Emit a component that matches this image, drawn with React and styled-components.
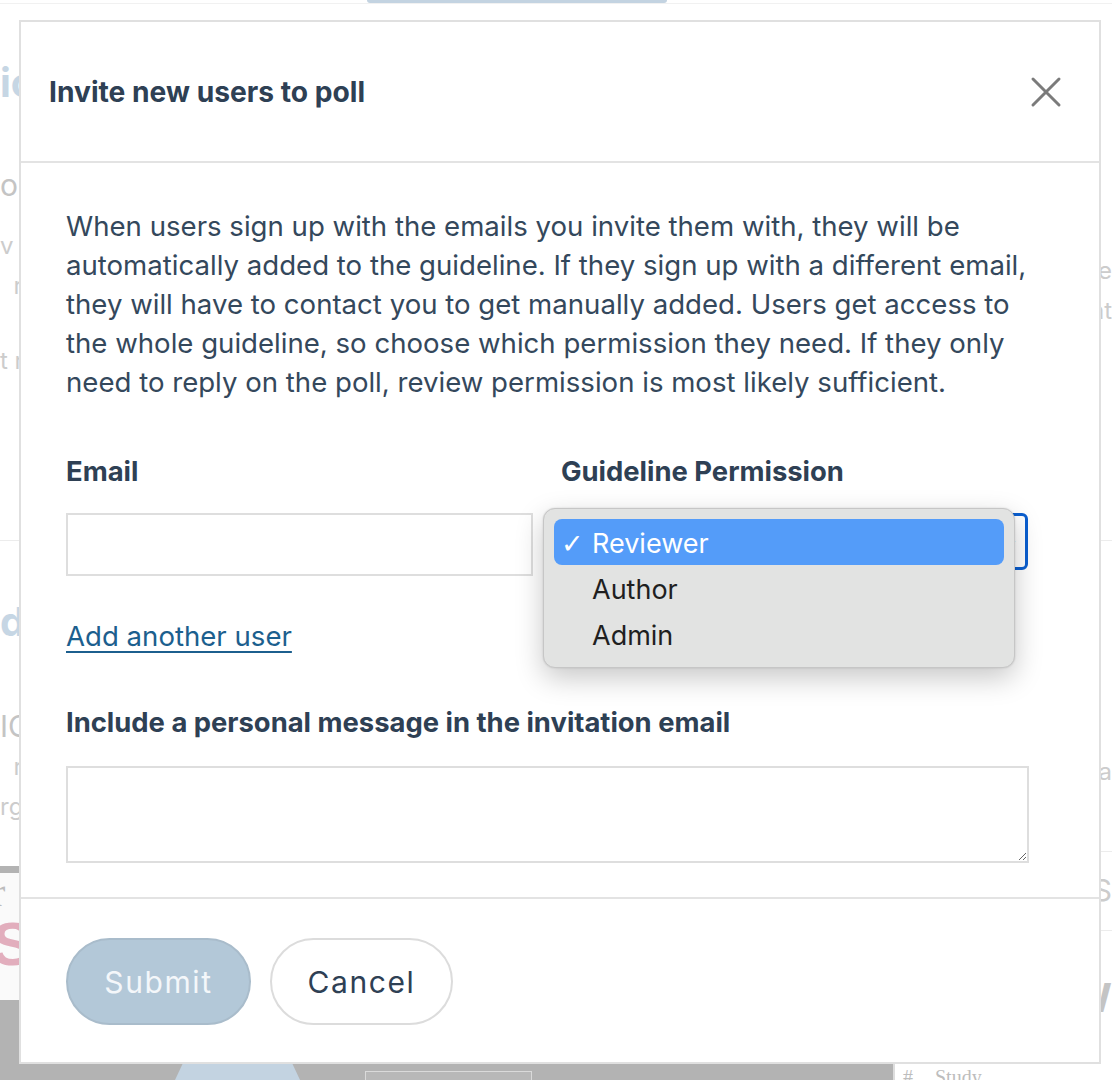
import React from 'react';
import styled, { createGlobalStyle } from 'styled-components';

const GlobalStyle = createGlobalStyle`
  html, body {
    margin: 0;
    padding: 0;
  }
  body {
    background: #fff;
    font-family: Inter, 'Noto Sans', sans-serif;
    overflow: hidden;
  }
`;

const Page = styled.div`
  position: relative;
  width: 1112px;
  height: 1080px;
  overflow: hidden;
  background: #fff;
`;

/* ---------- faded page behind the dialog ---------- */

const Backdrop = styled.div`
  display: flex;
  flex-direction: column;
  height: 100%;
`;

const TopBar = styled.div`
  height: 4px;
  border-bottom: 1px solid #f1f1f1;
  display: flex;
  padding-left: 367px;
  box-sizing: border-box;
`;

const TopTab = styled.div`
  width: 300px;
  height: 3px;
  background: #c3d3e1;
  border-radius: 0 0 3px 3px;
`;

const Upper = styled.div`
  height: 862px;
  display: flex;
  justify-content: space-between;
`;

const Edge = styled.div`
  width: ${(p) => p.$w}px;
  display: flex;
  flex-direction: column;
  overflow: hidden;
  align-items: ${(p) => (p.$right ? 'flex-end' : 'flex-start')};
`;

const Frag = styled.div`
  height: ${(p) => p.$h}px;
  flex-shrink: 0;
  display: flex;
  align-items: center;
  white-space: pre;
  font-size: ${(p) => p.$size || 24}px;
  font-weight: ${(p) => (p.$bold ? 700 : 400)};
  color: ${(p) => p.$color || '#c9c9c9'};
  ${(p) => p.$line && 'align-self: stretch; border-top: 1px solid #ececec;'}
`;

const Lower = styled.div`
  flex: 1;
  display: flex;
`;

const LowerLeft = styled.div`
  width: 893px;
  background: #b3b3b3;
  display: flex;
  flex-direction: column;
  padding-top: 7px;
  box-sizing: border-box;
`;

const ImageArea = styled.div`
  height: 127px;
  width: 60px;
  background: #fafafa;
  display: flex;
  flex-direction: column;
  font-family: 'Liberation Serif', serif;
  line-height: 1;
  overflow: hidden;
`;

const ImageWord = styled.span`
  font-size: ${(p) => p.$size}px;
  color: ${(p) => p.$color};
  font-weight: ${(p) => (p.$bold ? 700 : 400)};
  margin-left: -8px;
  font-family: ${(p) => (p.$sans ? "'Liberation Sans', sans-serif" : 'inherit')};
`;

const BottomShapes = styled.div`
  margin-top: auto;
  height: 16px;
  display: flex;
  align-items: flex-end;
`;

const BlueShape = styled.div`
  margin-left: 175px;
  width: 125px;
  height: 16px;
  background: #c3d3e1;
  clip-path: polygon(6% 0, 94% 0, 100% 100%, 0 100%);
`;

const BoxShape = styled.div`
  margin-left: 65px;
  width: 165px;
  height: 8px;
  border: 1px solid #dadada;
  border-bottom: none;
  background: #b8b8b8;
`;

const LowerRight = styled.div`
  flex: 1;
  display: flex;
  flex-direction: column;
  align-items: flex-end;
  background: #fff;
`;

const StudyHead = styled.div`
  margin-top: auto;
  align-self: stretch;
  height: 16px;
  display: flex;
  gap: 22px;
  padding-left: 8px;
  font-family: 'Liberation Serif', serif;
  font-size: 20px;
  color: #bdbdbd;
  border-left: 2px solid #ddd;
  line-height: 26px;
  overflow: hidden;
`;

/* ---------- dialog ---------- */

const Overlay = styled.div`
  position: absolute;
  inset: 0;
  padding: 20px 11px 16px 19px;
  display: flex;
`;

const Modal = styled.div`
  flex: 1;
  display: flex;
  flex-direction: column;
  background: #fff;
  border: 2px solid #e0e0e0;
  color: #2e4054;
`;

const Header = styled.div`
  height: 139px;
  display: flex;
  align-items: center;
  justify-content: space-between;
  padding: 0 36px 0 28px;
  border-bottom: 2px solid #e3e3e3;
`;

const Title = styled.h2`
  margin: 0;
  font-size: 28.2px;
  font-weight: 700;
  color: #2e4054;
`;

const CloseButton = styled.button`
  border: none;
  background: transparent;
  padding: 0;
  width: 34px;
  height: 34px;
  display: flex;
  align-items: center;
  justify-content: center;
  cursor: pointer;
`;

const Body = styled.div`
  padding: 44px 70px 34px 45px;
  border-bottom: 2px solid #e3e3e3;
`;

const Intro = styled.p`
  margin: 0 -18px 0 0;
  font-size: 27.6px;
  line-height: 39px;
  color: #34485c;
`;

const FieldGrid = styled.div`
  margin-top: 54px;
  display: grid;
  grid-template-columns: 467px 467px;
  column-gap: 28px;
`;

const Label = styled.label`
  display: block;
  font-size: 27.4px;
  font-weight: 700;
  line-height: 30px;
  color: #2e4054;
  margin-bottom: ${(p) => p.$gap || 27}px;
`;

const TextInput = styled.input`
  box-sizing: border-box;
  width: 100%;
  height: 63px;
  border: 2px solid #dedede;
  outline: none;
`;

const SelectWrap = styled.div`
  position: relative;
`;

const SelectBox = styled.div`
  box-sizing: border-box;
  height: 57px;
  border: 3px solid #0b5fd0;
  border-radius: 6px;
  display: flex;
  align-items: center;
  justify-content: flex-end;
  padding-right: 10px;
  color: #666;
  font-size: 10px;
`;

const Popup = styled.ul`
  position: absolute;
  left: -18px;
  top: -5px;
  width: 472px;
  box-sizing: border-box;
  margin: 0;
  padding: 10px;
  list-style: none;
  background: #e2e3e2;
  border: 1px solid #c6c6c6;
  border-radius: 12px;
  box-shadow: 0 10px 28px rgba(0, 0, 0, 0.22), 0 0 2px rgba(0, 0, 0, 0.15);
  font-family: Inter, 'Noto Sans', sans-serif;
  font-size: 27px;
`;

const Option = styled.li`
  height: 46px;
  display: flex;
  align-items: center;
  padding-top: 3px;
  box-sizing: border-box;
  border-radius: 8px;
  background: ${(p) => (p.$active ? '#549cf9' : 'transparent')};
  color: ${(p) => (p.$active ? '#fff' : '#1f1f1f')};
`;

const Check = styled.span`
  width: 38px;
  padding-left: 7px;
  box-sizing: border-box;
  font-size: 27px;
  font-weight: 700;
  font-family: 'DejaVu Sans', sans-serif;
`;

const AddLink = styled.a`
  display: inline-block;
  margin-top: 45px;
  font-size: 27.6px;
  line-height: 30px;
  color: #1c5f8e;
  text-decoration: underline;
  text-underline-offset: 5px;
  text-decoration-thickness: 2px;
`;

const MessageBlock = styled.div`
  margin-top: 56px;
`;

const MessageArea = styled.textarea`
  box-sizing: border-box;
  display: block;
  width: 100%;
  height: 97px;
  border: 2px solid #dedede;
  outline: none;
  resize: vertical;
`;

const Footer = styled.div`
  flex: 1;
  display: flex;
  align-items: flex-start;
  gap: 19px;
  padding: 39px 45px 0;
`;

const PillButton = styled.button`
  height: 87px;
  width: ${(p) => (p.$primary ? 185 : 183)}px;
  border-radius: 44px;
  font-family: Inter, 'Noto Sans', sans-serif;
  font-size: 30px;
  letter-spacing: 1.6px;
  cursor: pointer;
  border: 2px solid ${(p) => (p.$primary ? '#a9bccb' : '#dcdcdc')};
  background: ${(p) => (p.$primary ? '#b3c8d8' : '#fff')};
  color: ${(p) => (p.$primary ? '#f4f7fa' : '#2e4054')};
`;

const leftFrags = [
  { h: 58 },
  { h: 40, t: 'ic', size: 40, bold: true, color: '#c6d6e4' },
  { h: 63 },
  { h: 40, t: 'on', size: 30, color: '#c4c4c4' },
  { h: 20 },
  { h: 40, t: 'v', color: '#cccccc' },
  { h: 40, t: '  r', color: '#cccccc' },
  { h: 35 },
  { h: 40, t: 't r', color: '#cccccc' },
  { h: 160 },
  { h: 60, line: true },
  { h: 40, t: 'd', size: 40, bold: true, color: '#c6d6e4' },
  { h: 65 },
  { h: 40, t: 'IC', size: 30, color: '#c4c4c4' },
  { h: 40, t: '  r', color: '#cccccc' },
  { h: 40, t: 'rg', color: '#cccccc' },
];

const rightFrags = [
  { h: 246 },
  { h: 40, t: 'ne', color: '#cccccc' },
  { h: 40, t: 'at', color: '#cccccc' },
  { h: 210 },
  { h: 210, line: true },
  { h: 40, t: 'a', color: '#cccccc' },
  { h: 60 },
  { h: 1, line: true },
];

const options = ['Reviewer', 'Author', 'Admin'];

const CloseIcon = () => (
  <svg width="32" height="32" viewBox="0 0 32 32">
    <path
      d="M3 3 L29 29 M29 3 L3 29"
      stroke="#7b7b7b"
      strokeWidth="3"
      strokeLinecap="round"
    />
  </svg>
);

const App = () => {
  return (
    <Page>
      <GlobalStyle />
      <Backdrop>
        <TopBar>
          <TopTab />
        </TopBar>
        <Upper>
          <Edge $w={60}>
            {leftFrags.map((f, i) => (
              <Frag key={i} $h={f.h} $size={f.size} $bold={f.bold} $color={f.color} $line={f.line}>
                {f.t}
              </Frag>
            ))}
          </Edge>
          <Edge $w={40} $right>
            {rightFrags.map((f, i) => (
              <Frag key={i} $h={f.h} $size={f.size} $color={f.color} $line={f.line}>
                {f.t}
              </Frag>
            ))}
          </Edge>
        </Upper>
        <Lower>
          <LowerLeft>
            <ImageArea>
              <ImageWord $size={40} $color="#bdbdbd">r</ImageWord>
              <ImageWord $size={62} $color="#e2aebd" $bold $sans>S</ImageWord>
            </ImageArea>
            <BottomShapes>
              <BlueShape />
              <BoxShape />
            </BottomShapes>
          </LowerLeft>
          <LowerRight>
            <Frag $h={48} $size={30} $color="#cccccc">S</Frag>
            <Frag $h={16} />
            <Frag $h={1} $line />
            <Frag $h={130} $size={40} $bold $color="#c4c4c4">W</Frag>
            <StudyHead>
              <span>#</span>
              <span>Study</span>
            </StudyHead>
          </LowerRight>
        </Lower>
      </Backdrop>

      <Overlay>
        <Modal role="dialog" aria-label="Invite new users to poll">
          <Header>
            <Title>Invite new users to poll</Title>
            <CloseButton aria-label="Close">
              <CloseIcon />
            </CloseButton>
          </Header>
          <Body>
            <Intro>
              When users sign up with the emails you invite them with, they will be
              automatically added to the guideline. If they sign up with a different email,
              they will have to contact you to get manually added. Users get access to
              the whole guideline, so choose which permission they need. If they only
              need to reply on the poll, review permission is most likely sufficient.
            </Intro>
            <FieldGrid>
              <div>
                <Label>Email</Label>
                <TextInput type="email" />
              </div>
              <div>
                <Label>Guideline Permission</Label>
                <SelectWrap>
                  <SelectBox>▾</SelectBox>
                  <Popup>
                    {options.map((o, i) => (
                      <Option key={o} $active={i === 0}>
                        <Check>{i === 0 ? '✓' : ''}</Check>
                        {o}
                      </Option>
                    ))}
                  </Popup>
                </SelectWrap>
              </div>
            </FieldGrid>
            <AddLink href="#">Add another user</AddLink>
            <MessageBlock>
              <Label $gap={29}>Include a personal message in the invitation email</Label>
              <MessageArea />
            </MessageBlock>
          </Body>
          <Footer>
            <PillButton $primary>Submit</PillButton>
            <PillButton>Cancel</PillButton>
          </Footer>
        </Modal>
      </Overlay>
    </Page>
  );
};

export default App;
